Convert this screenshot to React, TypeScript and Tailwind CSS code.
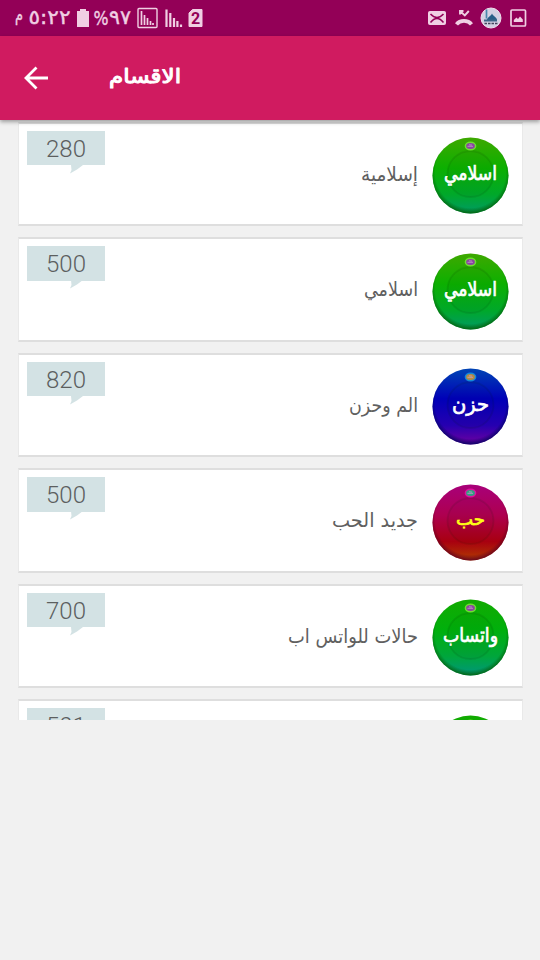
import React from "react";

type Category = {
  count: string;
  title: string;
  disc: string;
  colors: [string, string, string, string];
  rim: string;
  ink: string;
  discSize: number;
  discWidth: number;
  discY: number;
  titleWidth: number;
  gem: [string, string];
};

const green: [string, string, string, string] = ["#3ea800", "#0cb000", "#00a82a", "#009a66"];
const mint: [string, string, string, string] = ["#12aa00", "#00b00c", "#00a63c", "#00967e"];
const leaf: [string, string] = ["#6fe030", "#8a45a0"];

const categories: Category[] = [
  { count: "280", title: "إسلامية", disc: "اسلامي", colors: green, rim: "#056005", ink: "#ffffff", discSize: 20, discWidth: 53, discY: 43, titleWidth: 57, gem: leaf },
  { count: "500", title: "اسلامي", disc: "اسلامي", colors: green, rim: "#056005", ink: "#ffffff", discSize: 20, discWidth: 53, discY: 43, titleWidth: 54, gem: leaf },
  { count: "820", title: "الم وحزن", disc: "حزن", colors: ["#0044b4", "#0000b8", "#2600b0", "#7000a0"], rim: "#000560", ink: "#ffffff", discSize: 20, discWidth: 37, discY: 42.5, titleWidth: 69, gem: ["#1689d8", "#b88a40"] },
  { count: "500", title: "جديد الحب", disc: "حب", colors: ["#a8007a", "#ae0050", "#a80010", "#b03c00"], rim: "#600020", ink: "#ffff16", discSize: 17, discWidth: 29, discY: 41, titleWidth: 86, gem: ["#e010a0", "#30a080"] },
  { count: "700", title: "حالات للواتس اب", disc: "واتساب", colors: mint, rim: "#056005", ink: "#ffffff", discSize: 20, discWidth: 55, discY: 43, titleWidth: 130, gem: leaf },
  { count: "501", title: "", disc: "", colors: mint, rim: "#056005", ink: "#ffffff", discSize: 20, discWidth: 55, discY: 43, titleWidth: 0, gem: leaf },
];

function Disc({ item, id }: { item: Category; id: string }) {
  const [a, b, c, d] = item.colors;
  return (
    <svg className="mt-[13.5px] h-[77px] w-[77px] shrink-0 overflow-visible" viewBox="0 0 77 77">
      <defs>
        <linearGradient id={id} x1="0" y1="0" x2="0" y2="1">
          <stop offset="0" stopColor={a} />
          <stop offset="0.4" stopColor={b} />
          <stop offset="0.75" stopColor={c} />
          <stop offset="1" stopColor={d} />
        </linearGradient>
        <radialGradient id={`${id}-shade`} cx="0.5" cy="0.46" r="0.54">
          <stop offset="0.86" stopColor={item.rim} stopOpacity="0" />
          <stop offset="1" stopColor={item.rim} stopOpacity="0.9" />
        </radialGradient>
      </defs>
      <circle cx="38.5" cy="38.500" r="38" fill={`url(#${id})`} />
      <circle cx="38.5" cy="38.500" r="38" fill={`url(#${id}-shade)`} />
      <circle cx="38.5" cy="37" r="23" fill="#000000" fillOpacity="0.03" stroke="#002000" strokeOpacity="0.1" strokeWidth="1.800" />
      <ellipse cx="38.5" cy="9" rx="5.8" ry="4.6" fill={item.gem[0]} />
      <ellipse cx="38.5" cy="9" rx="4.400" ry="3" fill={item.gem[1]} />
      <path d="M35.5 9.3h5.5M37 7.8l3 .3" stroke="#c0a0c8" strokeWidth="0.8" />
      {item.disc && (
        <text x="38.5" y={item.discY} textAnchor="middle" direction="rtl" fill={item.ink} stroke={item.ink} strokeWidth="0.7" fontFamily='"DejaVu Sans", sans-serif' fontSize={item.discSize} textLength={item.discWidth} lengthAdjust="spacingAndGlyphs">
          {item.disc}
        </text>
      )}
    </svg>
  );
}

function Card({ item, id }: { item: Category; id: string }) {
  return (
    <div className="flex h-[104.5px] shrink-0 border-x border-y-2 border-x-[#e9e9e9] border-y-[#dedede] bg-white pl-[8px] pr-[13px]">
      <div className="relative mt-[7px] flex h-[34.5px] w-[78px] items-center justify-center bg-[#d3e2e4] pt-[2px] font-['Roboto'] text-[24px] font-light leading-none text-[#5c5f5f]">
        {item.count}
        <svg className="absolute left-[42px] top-[34px] h-[9px] w-[15px]" viewBox="0 0 15 9">
          <path d="M2 0H14L8 4.500 1 8.500 2.500 5Z" fill="#d3e2e4" />
        </svg>
      </div>
      <div className="flex-1" />
      <svg className="mr-[14px] mt-[34px] h-[36px] w-[150px] overflow-visible" viewBox="0 0 150 36">
        {item.title && (
          <text x="150" y="22.500" direction="rtl" textAnchor="start" fill="#606060" fontFamily='"DejaVu Sans", sans-serif' fontSize="19.500" textLength={item.titleWidth} lengthAdjust="spacingAndGlyphs">
            {item.title}
          </text>
        )}
      </svg>
      <Disc item={item} id={id} />
    </div>
  );
}

function StatusBar() {
  return (
    <div className="flex h-9 shrink-0 items-center bg-[#930057] text-[#f0cfe3]">
      <svg className="h-9 w-[220px]" viewBox="0 0 220 36" fill="none" stroke="currentColor">
        <g fill="currentColor" strokeWidth="0.4" fontFamily='"DejaVu Sans", sans-serif' fontSize="20">
          <text x="15" y="21" fontSize="18" textLength="8" lengthAdjust="spacingAndGlyphs">م</text>
          <text x="28.500" y="24" direction="ltr" textLength="42" lengthAdjust="spacingAndGlyphs">٥:٢٢</text>
          <text x="93.500" y="25" fontSize="19" textLength="15" lengthAdjust="spacingAndGlyphs">%</text>
          <text x="109" y="24" textLength="22" lengthAdjust="spacingAndGlyphs">٩٧</text>
        </g>
        <path d="M77 11h3V9h6v2h3v16H77Z" fill="currentColor" stroke="none" />
        <rect x="138" y="8.500" width="19" height="19" rx="1" strokeWidth="1.4" />
        <path d="M141.500 11v14M144.500 15v10M147.500 18v7M150.500 21v4M153 23v2" strokeWidth="1.700" />
        <path d="M166.500 9.500v17.500M170.300 13v14M174 18v9M177.400 21v6M181 24.500v2.500" strokeWidth="2.200" />
        <path d="M192.500 9.500h9.500v17h-13V13Z" fill="currentColor" strokeLinejoin="round" />
        <text x="195.700" y="23.700" textAnchor="middle" fill="#930057" stroke="none" fontFamily="Roboto, sans-serif" fontSize="16" fontWeight="700">2</text>
      </svg>
      <div className="flex-1" />
      <svg className="h-9 w-[112px]" viewBox="428 0 112 36" fill="none" stroke="currentColor">
        <rect x="428.500" y="11.500" width="17" height="13" rx="1" fill="currentColor" />
        <path d="M430.500 14c4 4.500 9 4.500 13 0M430.500 22.500c4-5.500 9-5.500 13 0" stroke="#930057" strokeWidth="1.500" />
        <path d="M456.500 24.300c3.500-4.500 11.500-4.500 15 0" strokeWidth="3.800" />
        <path d="M460 14.500v-3.500h3.500M460 11l4.800 4.500 4-4.500" strokeWidth="1.900" />
        <circle cx="491" cy="18" r="10" fill="#d3d0e3" stroke="#f0dfed" />
        <path d="M487 20c0-3 4-3.500 5-6.500 1 3 5 3.500 5 6.500Z" fill="#285e88" stroke="none" />
        <path d="M486.500 9.500v9" stroke="#4a87ac" strokeWidth="1.700" />
        <path d="M484 20.500h13" stroke="#3c6588" strokeWidth="2" />
        <path d="M484.500 23.500h13" stroke="#43445c" strokeWidth="1.300" strokeDasharray="2.500 1" />
        <rect x="511" y="10" width="14.500" height="16" rx="1" strokeWidth="1.700" />
        <path d="M513.800 22v-2l2.700-2.500 1.500 1.500 2-2.500 2.800 3v2.500Z" fill="currentColor" stroke="none" />
      </svg>
    </div>
  );
}

export default function App() {
  return (
    <main className="flex h-[960px] w-[540px] flex-col overflow-hidden bg-[#f1f1f1]">
      <StatusBar />
      <header className="z-10 flex h-[84px] shrink-0 items-center bg-[#d01b60] text-white shadow-[0_2px_4px_rgba(0,0,0,0.35)]">
        <svg className="ml-[24px] h-[26px] w-[26px]" viewBox="0 0 26 26" fill="none" stroke="currentColor" strokeWidth="2.800">
          <path d="M24 13H3M12.500 2.500 2 13l10.500 10.500" />
        </svg>
        <svg className="ml-[58px] h-[40px] w-[75px] overflow-visible" viewBox="0 0 75 40">
          <text x="73" y="24.500" direction="rtl" textAnchor="start" fill="currentColor" stroke="currentColor" strokeWidth="1" strokeLinejoin="round" fontFamily='"DejaVu Sans", sans-serif' fontSize="20" textLength="72" lengthAdjust="spacingAndGlyphs">الاقسام</text>
        </svg>
      </header>
      <section className="flex h-[600px] shrink-0 flex-col gap-[11px] overflow-hidden pl-[18px] pr-[17px] pt-[1.5px]">
        {categories.map((item, i) => (
          <Card key={i} item={item} id={`disc-${i}`} />
        ))}
      </section>
    </main>
  );
}
